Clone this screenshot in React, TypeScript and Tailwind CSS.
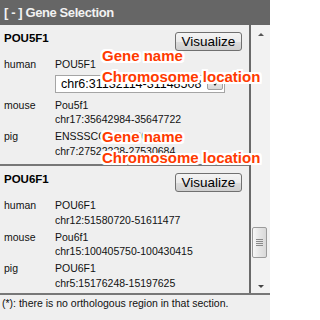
type Row = { sp: string; gene: string; loc: string; select?: boolean };
type Gene = { name: string; rows: Row[] };

const genes: Gene[] = [
  {
    name: "POU5F1",
    rows: [
      { sp: "human", gene: "POU5F1", loc: "chr6:31132114-31148508", select: true },
      { sp: "mouse", gene: "Pou5f1", loc: "chr17:35642984-35647722" },
      { sp: "pig", gene: "ENSSSCG00000001393", loc: "chr7:27522238-27530684" },
    ],
  },
  {
    name: "POU6F1",
    rows: [
      { sp: "human", gene: "POU6F1", loc: "chr12:51580720-51611477" },
      { sp: "mouse", gene: "Pou6f1", loc: "chr15:100405750-100430415" },
      { sp: "pig", gene: "POU6F1", loc: "chr5:15176248-15197625" },
    ],
  },
];

const VisualizeBtn = () => (
  <button className="h-[19px] w-[67px] rounded-[3px] border border-[#707070] bg-[linear-gradient(#f4f4f4_0%,#ebebeb_50%,#dddddd_51%,#cfcfcf_100%)] text-[13.5px] leading-[17px] text-black">
    Visualize
  </button>
);

const LocSelect = ({ loc }: { loc: string }) => (
  <div className="mt-[3px] mb-[2.5px] flex h-[18px] w-[170px] items-center border border-[#a5a5a5] bg-white pl-[5px] pr-px">
    <span className="flex-1 overflow-hidden whitespace-nowrap text-[12.5px] leading-[16px] text-black">{loc}</span>
    <div className="flex h-[13px] w-[16px] items-center justify-center rounded-[2px] border border-[#a0a0a0] bg-[linear-gradient(#f2f2f2,#d8d8d8)]">
      <div className="h-0 w-0 border-x-[3.5px] border-t-[4px] border-x-transparent border-t-[#222]" />
    </div>
  </div>
);

const GeneBlock = ({ gene, last }: { gene: Gene; last?: boolean }) => (
  <div className={`pl-[4px] pr-[7px] pt-[7px] pb-[6px] ${last ? "" : "border-b-2 border-[#777]"}`}>
    <div className="flex items-start justify-between">
      <span className="text-[11.5px] font-bold leading-[12px] text-black">{gene.name}</span>
      <VisualizeBtn />
    </div>
    <div className="mt-[6px] flex flex-col text-[10.5px] leading-[14.5px] text-[#111]">
      {gene.rows.map((r, i) => (
        <div key={r.sp} className={`flex ${i > 0 ? "mt-[2.5px]" : ""}`}>
          <div className="w-[51px]">{r.sp}</div>
          <div className="flex flex-col whitespace-nowrap">
            <span>{r.gene}</span>
            {r.select ? <LocSelect loc={r.loc} /> : <span>{r.loc}</span>}
          </div>
        </div>
      ))}
    </div>
  </div>
);

// annotation labels drawn over the panel
const Note = ({ top }: { top: string }) => (
  <div
    className={`absolute left-[102px] ${top} text-[15px] font-bold leading-[21px] text-[#ff3a00] [text-shadow:2px_0_#fff,-2px_0_#fff,0_2px_#fff,0_-2px_#fff,2px_2px_#fff,-2px_-2px_#fff,2px_-2px_#fff,-2px_2px_#fff,1px_0_#fff,-1px_0_#fff,0_1px_#fff,0_-1px_#fff,2px_1px_#fff,-2px_1px_#fff,2px_-1px_#fff,-2px_-1px_#fff,1px_2px_#fff,-1px_2px_#fff,1px_-2px_#fff,-1px_-2px_#fff]`}
  >
    <div>Gene name</div>
    <div className="whitespace-nowrap">Chromosome location</div>
  </div>
);

export default function App() {
  return (
    <div className="relative h-[320px] w-[270px] overflow-hidden bg-[#efefef] font-['Liberation_Sans',Arial,sans-serif]">
      <div className="h-[25px] bg-[#666666] pl-[4px] text-[13px] font-bold leading-[25px] tracking-[-0.4px] text-[#f2f2f2]">
        [ - ] Gene Selection
      </div>
      <div className="flex h-[268px]">
        <div className="w-[249px] overflow-hidden">
          {genes.map((g, i) => (
            <GeneBlock key={g.name} gene={g} last={i === genes.length - 1} />
          ))}
        </div>
        <div className="w-[2px] bg-[#6a6a6a]" />
        {/* fake scrollbar */}
        <div className="flex w-[19px] flex-col items-center bg-[#f2f2f2] pt-[8px] pb-[5px]">
          <div className="h-0 w-0 border-x-[3px] border-b-[3px] border-x-transparent border-b-[#555]" />
          <div className="mt-auto ml-[-3px] flex h-[31px] w-[15px] flex-col items-center justify-center gap-[1px] rounded-[2px] border border-[#9b9b9b] bg-[linear-gradient(90deg,#f8f8f8,#e6e6e6_50%,#d9d9d9)]">
            <div className="h-px w-[7px] bg-[#8a8a8a]" />
            <div className="h-px w-[7px] bg-[#8a8a8a]" />
            <div className="h-px w-[7px] bg-[#8a8a8a]" />
            <div className="h-px w-[7px] bg-[#8a8a8a]" />
          </div>
          <div className="mt-[27px] h-0 w-0 border-x-[3.5px] border-t-[3.5px] border-x-transparent border-t-[#444]" />
        </div>
      </div>
      <div className="h-[27px] border-t-2 border-[#777] pl-[2px] pt-[1px] text-[10.5px] leading-[14.5px] text-[#111]">
        (*): there is no orthologous region in that section.
      </div>
      <Note top="top-[45px]" />
      <Note top="top-[126px]" />
    </div>
  );
}
